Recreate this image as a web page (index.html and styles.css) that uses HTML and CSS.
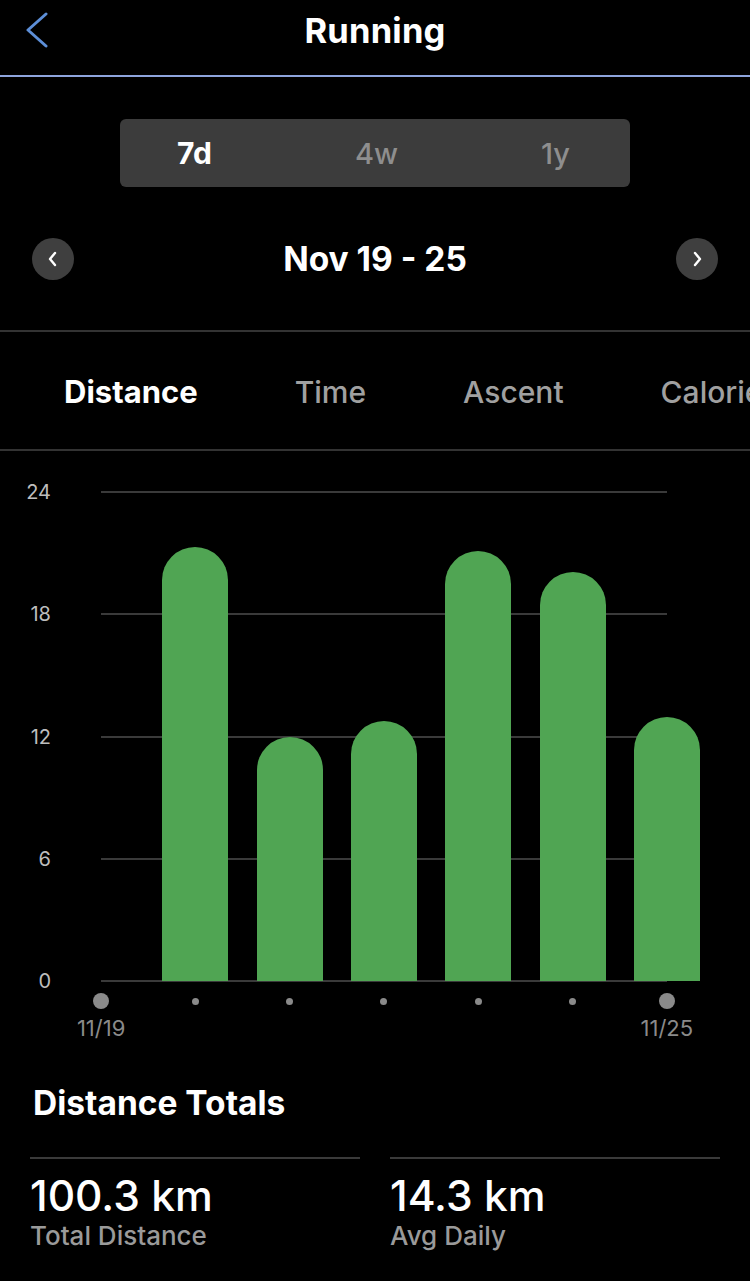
FILE: index.html
```html
<!DOCTYPE html>
<html lang="en">
<head>
<meta charset="utf-8">
<title>Running</title>
<link rel="stylesheet" href="styles.css">
</head>
<body>
<div class="app">
  <header class="topbar">
    <div class="back">
      <svg width="24" height="40" viewBox="0 0 24 40"><polyline points="21,6 3,22 21,38" fill="none" stroke="#5d8fd8" stroke-width="3" stroke-linecap="round" stroke-linejoin="round"/></svg>
    </div>
    <h1 class="title">Running</h1>
    <div></div>
  </header>

  <div class="segment-wrap">
    <div class="segment">
      <span class="seg active">7d</span>
      <span class="seg">4w</span>
      <span class="seg">1y</span>
    </div>
  </div>

  <div class="daterow">
    <span class="circle">
      <svg width="12" height="16" viewBox="0 0 12 16"><polyline points="8,2 3,8 8,14" fill="none" stroke="#fff" stroke-width="2.4" stroke-linecap="round" stroke-linejoin="round"/></svg>
    </span>
    <span class="daterange">Nov 19 - 25</span>
    <span class="circle">
      <svg width="12" height="16" viewBox="0 0 12 16"><polyline points="4,2 9,8 4,14" fill="none" stroke="#fff" stroke-width="2.4" stroke-linecap="round" stroke-linejoin="round"/></svg>
    </span>
  </div>

  <nav class="tabs">
    <span class="tab active">Distance</span>
    <span class="tab">Time</span>
    <span class="tab">Ascent</span>
    <span class="tab">Calories</span>
  </nav>

  <section class="chart">
    <div class="yaxis">
      <span>24</span><span>18</span><span>12</span><span>6</span><span>0</span>
    </div>
    <div class="plotcol">
      <div class="plot">
        <div class="grid">
          <i></i><i></i><i></i><i></i><i></i>
        </div>
        <div class="bars">
          <div class="col"></div>
          <div class="col"><div class="bar" style="height:434px"></div></div>
          <div class="col"><div class="bar" style="height:244px"></div></div>
          <div class="col"><div class="bar" style="height:260px"></div></div>
          <div class="col"><div class="bar" style="height:430px"></div></div>
          <div class="col"><div class="bar" style="height:409px"></div></div>
          <div class="col"><div class="bar" style="height:264px"></div></div>
        </div>
      </div>
      <div class="dots">
        <div class="col"><b class="big"></b></div>
        <div class="col"><b></b></div>
        <div class="col"><b></b></div>
        <div class="col"><b></b></div>
        <div class="col"><b></b></div>
        <div class="col"><b></b></div>
        <div class="col"><b class="big"></b></div>
      </div>
      <div class="xlabels">
        <div class="col">11/19</div>
        <div class="col"></div>
        <div class="col"></div>
        <div class="col"></div>
        <div class="col"></div>
        <div class="col"></div>
        <div class="col">11/25</div>
      </div>
    </div>
  </section>

  <section class="totals">
    <h2>Distance Totals</h2>
    <div class="stats">
      <div class="stat">
        <div class="value">100.3 km</div>
        <div class="label">Total Distance</div>
      </div>
      <div class="stat">
        <div class="value">14.3 km</div>
        <div class="label">Avg Daily</div>
      </div>
    </div>
  </section>
</div>
</body>
</html>
```

FILE: styles.css
```css
* { box-sizing: border-box; margin: 0; padding: 0; }
html, body { background: #000; }
body {
  font-family: Inter, "Noto Sans", sans-serif;
  color: #fff;
  width: 750px;
  height: 1281px;
  overflow: hidden;
}
.app { width: 750px; }

.topbar {
  height: 77px;
  display: grid;
  grid-template-columns: 1fr auto 1fr;
  align-items: start;
  border-bottom: 2px solid #8ea4dc;
}
.back { padding: 8px 0 0 25px; height: 48px; }
.title {
  font-size: 34.5px;
  font-weight: 700;
  line-height: 42px;
  padding-top: 10px;
  letter-spacing: 0.2px;
}

.segment-wrap { display: flex; justify-content: center; padding-top: 42px; }
.segment {
  width: 510px;
  height: 68px;
  background: #3c3c3c;
  border-radius: 6px;
  display: flex;
  align-items: center;
  justify-content: space-between;
  padding: 0 60px 0 57px;
}
.seg { font-size: 29px; color: #8e8e8e; font-weight: 500; }
.seg.active { color: #fff; font-weight: 700; font-size: 30px; }

.daterow {
  margin-top: 51px;
  height: 42px;
  display: flex;
  align-items: center;
  justify-content: space-between;
  padding: 0 32px;
}
.circle {
  width: 42px; height: 42px;
  border-radius: 50%;
  background: #3f3f3f;
  display: flex; align-items: center; justify-content: center;
}
.daterange { font-size: 33.5px; font-weight: 700; }

.tabs {
  margin-top: 50px;
  border-top: 2px solid #333;
  border-bottom: 2px solid #333;
  display: flex;
  gap: 97px;
  padding-left: 64px;
  white-space: nowrap;
  overflow: hidden;
}
.tab {
  font-size: 30px;
  font-weight: 500;
  color: #a0a0a0;
  line-height: 40px;
  padding: 40px 0 37px;
  border-bottom: 2px solid transparent;
  margin-bottom: -2px;
}
.tab.active { color: #fff; font-weight: 700; font-size: 31px; border-bottom-color: #fff; }

.chart { display: flex; padding-top: 41px; }
.yaxis {
  width: 52px;
  height: 513px;
  margin-top: -12px;
  display: flex;
  flex-direction: column;
  justify-content: space-between;
  align-items: flex-end;
  font-size: 20px;
  line-height: 24px;
  color: #bdbdbd;
  padding-right: 1px;
}
.plotcol { width: 660px; margin-left: 2px; }
.plot { position: relative; height: 489px; }
.grid {
  position: absolute;
  top: 0; bottom: 0; left: 47px; right: 47px;
  display: flex; flex-direction: column; justify-content: space-between;
}
.grid i { display: block; height: 2px; margin-top: -1px; background: #3a3a3a; }
.grid i:last-child { margin-bottom: -1px; }
.bars {
  position: relative;
  height: 100%;
  display: flex;
  align-items: flex-end;
}
.col { flex: 1; display: flex; justify-content: center; }
.bar { width: 66px; background: #50a553; border-radius: 33px 33px 0 0; }

.dots { display: flex; height: 40px; align-items: center; }
.dots b { display: block; width: 7px; height: 7px; border-radius: 50%; background: #8a8a8a; }
.dots b.big { width: 16px; height: 16px; }
.xlabels { display: flex; margin-top: -5px; }
.xlabels .col {
  font-size: 22px;
  color: #8a8a8a;
  line-height: 24px;
  white-space: nowrap;
}

.totals { padding: 44px 30px 0 30px; }
.totals h2 {
  font-size: 33.5px;
  font-weight: 700;
  line-height: 38px;
  padding-left: 3px;
}
.stats { display: flex; gap: 30px; margin-top: 35px; }
.stat { flex: 1; border-top: 2px solid #3a3a3a; padding-top: 13px; }
.value { font-size: 42.5px; font-weight: 500; line-height: 48px; }
.label { font-size: 26px; color: #9a9a9a; line-height: 28px; margin-top: 2px; font-weight: 500; }
```
